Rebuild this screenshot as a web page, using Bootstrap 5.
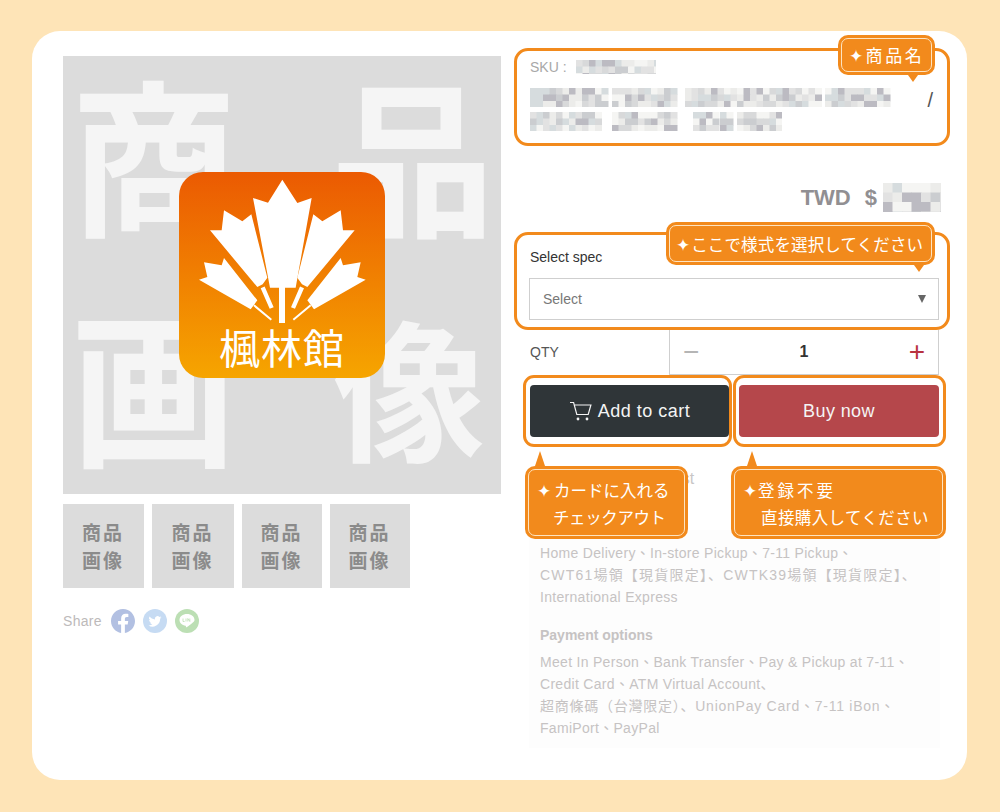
<!DOCTYPE html>
<html lang="ja">
<head>
    <meta charset="UTF-8">
    <meta name="viewport" content="width=device-width, initial-scale=1.0">
    <title>商品ページの説明</title>
    <link rel="stylesheet" href="https://cdn.jsdelivr.net/npm/bootstrap@5.3.2/dist/css/bootstrap.min.css">
    <style>
        html, body { height: 100%; }
        body {
            background-color: #fee4b7;
            padding: 31px 33px 32px 32px;
            font-family: "Liberation Sans", "Noto Sans CJK TC", sans-serif;
            font-size: 14px;
            overflow: hidden;
        }
        .sheet {
            height: 749px;
            background-color: #fff;
            border-radius: 28px;
            padding: 17px 0 0 31px;
            gap: 13px;
        }
        .left-col { width: 438px; margin-top: 8px; }
        .right-col { width: 436px; }

        .main-pic {
            width: 438px;
            height: 438px;
            background-color: #dcdcdc;
            color: #f5f5f5;
            font: 700 168px/1 "Noto Sans CJK JP", sans-serif;
            display: grid;
            grid-template-columns: 1fr 1fr;
            align-content: start;
            padding: 11px 1px 0 7px;
        }
        .main-pic span:nth-child(even) { text-align: right; }
        .main-pic span:nth-child(2) { margin-right: 5px; }
        .main-pic span:nth-child(3) { margin-top: 62px; }
        .main-pic span:nth-child(4) { margin: 73px 15px 0 0; font-size: 152px; }
        .logo-box {
            position: absolute;
            left: 116px;
            top: 116px;
            width: 206px;
            height: 206px;
            border-radius: 24px;
            background: linear-gradient(#eb5a02, #f6a500);
        }
        .logo-box svg { position: absolute; left: 0; top: 0; }
        .logo-name {
            position: absolute;
            left: 0;
            right: 0;
            top: 146px;
            text-align: center;
            color: #fff;
            font: 400 41px/56px "Noto Sans CJK TC", sans-serif;
            letter-spacing: 1px;
        }

        .thumb-row { margin-top: 10px; gap: 8px; }
        .thumb {
            height: 84px;
            background-color: #dcdcdc;
            color: #8b8b8b;
            font: 700 19px/28px "Noto Sans CJK JP", sans-serif;
            letter-spacing: 2px;
            text-align: center;
            padding: 14px 1px 0 0;
        }
        .share-row { margin-top: 21px; gap: 9px; color: #bdbaba; height: 24px; letter-spacing: .3px; }
        .share-row svg { display: block; }
        .share-icons { gap: 8px; }

        .hl-box {
            border: 3px solid #f28a1c;
            border-radius: 14px;
        }
        .title-box { height: 98px; padding: 7px 13px 0 13px; }
        .sku-row { color: #a8a8a8; height: 18px; gap: 9px; }
        .title-row { margin-top: 12px; }
        .title-row svg + svg { margin-top: 5px; }
        .title-slash { color: #555; font-size: 20px; line-height: 24px; margin-right: 1px; }
        .price-row { height: 86px; padding: 37px 9px 0 0; gap: 6px; color: #918f92; font-size: 22px; font-weight: 700; line-height: 29px; }

        .spec-box { height: 98px; padding: 11px 8px 0 12px; }
        .spec-label { color: #333; height: 32px; line-height: 22px; margin-left: 1px; }
        .pick-box {
            height: 42px;
            border: 1px solid #cfcfcf;
            border-radius: 0;
            padding: 0 13px;
            color: #777;
            font-size: 14px;
        }
        .pick-arrow {
            width: 0;
            height: 0;
            border-left: 4px solid transparent;
            border-right: 4px solid transparent;
            border-top: 8px solid #666;
            margin-right: -1px;
        }
        .qty-row { height: 45px; margin: 0 11px 0 16px; color: #555; }
        .qty-box {
            width: 270px;
            border: 1px solid #cfcfcf;
            border-top: 0;
            padding: 0 13px;
            color: #333;
            font-weight: 700;
            font-size: 16px;
        }
        .qty-minus, .qty-plus { font: 400 28px/1 "Liberation Sans", sans-serif; }
        .qty-minus { color: #b5b5b5; }
        .qty-plus { color: #b8323f; }

        .buy-row { margin-left: 9px; width: 423px; gap: 1px; }
        .buy-cell { height: 72px; border-radius: 11px; padding-top: 7px; padding-bottom: 7px; }
        .cell-add { width: 209px; padding-left: 4px; padding-right: 0; }
        .cell-buy { width: 213px; padding-left: 3px; padding-right: 4px; }
        .cta {
            width: 100%;
            height: 52px;
            border: 0;
            border-radius: 4px;
            font-size: 18px;
            color: #f4f4f4;
            gap: 5px;
        }
        .cta-add, .cta-add:hover { background-color: #2f3538; letter-spacing: .5px; }
        .cta-buy, .cta-buy:hover { background-color: #b5474b; letter-spacing: .4px; }
        .wish-row { height: 83px; padding: 20px 0 0 78px; color: #c8c6c6; font-size: 16px; }

        .info-panel {
            width: 411px;
            height: 218px;
            margin-left: 15px;
            padding: 12px 0 0 11px;
            background-color: #fdfdfd;
            color: #c6c3c3;
            line-height: 22px;
            letter-spacing: .3px;
            white-space: nowrap;
        }
        .info-panel p { margin: 0; }
        .info-head { font-weight: 700; letter-spacing: 0; margin-top: 16px !important; margin-bottom: 5px !important; }
        .wide-line { letter-spacing: 1.2px; }
        .mid-line { letter-spacing: .75px; }

        .tip {
            position: absolute;
            background-color: #f28a1c;
            border-radius: 10px;
            padding: 3px;
            z-index: 5;
        }
        .tip-in {
            height: 100%;
            border: 1px solid #fde3c0;
            border-radius: 7px;
            color: #fff;
            font: 400 16.5px/26px "Noto Sans CJK JP", sans-serif;
            white-space: nowrap;
        }
        .tip-star { margin-right: 1px; }
        .tip::after {
            content: "";
            position: absolute;
            border-left: 5px solid transparent;
            border-right: 5px solid transparent;
        }
        .tip-down::after { top: 100%; border-top: 7px solid #f28a1c; }
        .tip-up::after { bottom: 100%; border-bottom: 15px solid #f28a1c; }
        .tip-name { left: 324px; top: -13px; width: 97px; height: 40px; }
        .tip-name .tip-in { padding: 3px 0 0 7px; font-size: 17px; letter-spacing: 2.6px; }
        .tip-name::after { left: 70px; }
        .tip-spec { left: 152px; top: 174px; width: 269px; height: 43px; }
        .tip-spec .tip-in { padding: 5px 0 0 6px; letter-spacing: .15px; }
        .tip-spec::after { left: 248px; }
        .tip-cart { left: 11px; top: 418px; width: 163px; height: 73px; }
        .tip-cart::after { left: 10px; }
        .tip-now { left: 217px; top: 418px; width: 215px; height: 73px; }
        .tip-now::after { left: 16px; }
        .tip-cart .tip-in, .tip-now .tip-in { padding: 7px 0 0 8px; line-height: 27px; }
        .tip-cart .tip-star { margin-right: 3px; }
        .tip-pad { padding-left: 16px; letter-spacing: -.4px; }
        .tip-pad-2 { padding-left: 18px; letter-spacing: .4px; }
        .tip-spread { letter-spacing: 3px; }
    </style>
</head>
<body>
    <main class="sheet d-flex">
        <section class="left-col">
            <div class="main-pic position-relative">
                <span>商</span><span>品</span><span>画</span><span>像</span>
                <div class="logo-box">
                    <svg width="206" height="206" viewBox="55 35 618 618" fill="#fff">
                        <polygon points="365,58 410,128 453,113 405,382 373,382 373,488 355,488 355,382 328,382 277,113 322,127"/>
                        <polygon points="148,210 183,210 190,150 245,183 272,162 320,352 306,372 290,380"/>
                        <polygon points="582,210 547,210 540,150 485,183 458,162 410,352 424,372 440,380"/>
                        <polygon points="115,358 140,350 130,306 183,315 190,293 290,420 270,447"/>
                        <polygon points="615,358 590,350 600,306 547,315 540,293 440,420 460,447"/>
                        <path d="M306 381L333 443M424 381L397 443" stroke="#fff" stroke-width="13" fill="none"/>
                        <path d="M280 435L332 478M450 435L398 478" stroke="#fff" stroke-width="6" fill="none"/>
                    </svg>
                    <div class="logo-name">楓林館</div>
                </div>
            </div>
            <div class="thumb-row d-flex">
                <div class="thumb" style="width: 81px">商品<br>画像</div>
                <div class="thumb" style="width: 82px">商品<br>画像</div>
                <div class="thumb" style="width: 80px">商品<br>画像</div>
                <div class="thumb" style="width: 80px">商品<br>画像</div>
            </div>
            <div class="share-row d-flex align-items-center">
                <span>Share</span>
                <div class="share-icons d-flex">
                    <svg width="24" height="24" viewBox="0 0 16 16" fill="#b2c0e2"><path d="M16 8.049c0-4.446-3.582-8.05-8-8.05C3.58 0-.002 3.603-.002 8.05c0 4.017 2.926 7.347 6.75 7.951v-5.625h-2.03V8.05H6.75V6.275c0-2.017 1.195-3.131 3.022-3.131.876 0 1.791.157 1.791.157v1.98h-1.009c-.993 0-1.303.621-1.303 1.258v1.51h2.218l-.354 2.326H9.25V16c3.824-.604 6.75-3.934 6.75-7.951z"/></svg>
                    <svg width="24" height="24" viewBox="0 0 24 24"><circle cx="12" cy="12" r="12" fill="#c6dbf3"/><g transform="translate(5.5 5.5) scale(.81)"><path fill="#fff" d="M5.026 15c6.038 0 9.341-5.003 9.341-9.334 0-.14 0-.282-.006-.422A6.685 6.685 0 0 0 16 3.542a6.658 6.658 0 0 1-1.889.518 3.301 3.301 0 0 0 1.447-1.817 6.533 6.533 0 0 1-2.087.793A3.286 3.286 0 0 0 7.875 6.03a9.325 9.325 0 0 1-6.767-3.429 3.289 3.289 0 0 0 1.018 4.382A3.323 3.323 0 0 1 .64 6.575v.045a3.288 3.288 0 0 0 2.632 3.218 3.203 3.203 0 0 1-.865.115 3.23 3.23 0 0 1-.614-.057 3.283 3.283 0 0 0 3.067 2.277A6.588 6.588 0 0 1 .78 13.58a6.32 6.32 0 0 1-.78-.045A9.344 9.344 0 0 0 5.026 15z"/></g></svg>
                    <svg width="24" height="24" viewBox="0 0 24 24"><circle cx="12" cy="12" r="12" fill="#bcdfb4"/><path fill="#fff" d="M12 5c-4.2 0-7.5 2.6-7.5 5.9 0 2.9 2.6 5.3 6.1 5.8.5.1.4.6.3 1.2-.1.5.2.6.7.3 1.2-.7 4.4-2.6 6-4.4 1.2-1.1 1.9-1.9 1.9-2.9C19.5 7.6 16.2 5 12 5z"/><path d="M8 9.5v3h1.6M11 9.5v3M12.8 12.5v-3l2 3v-3" fill="none" stroke="#bcdfb4" stroke-width=".8"/></svg>
                </div>
            </div>
        </section>

        <section class="right-col position-relative">
            <div class="hl-box title-box">
                <div class="sku-row d-flex align-items-center">
                    <span>SKU :</span>
                    <svg class="mosaic" width="80" height="14" data-words="0,80" data-cell="6.5"></svg>
                </div>
                <div class="title-row d-flex justify-content-between align-items-start">
                    <div>
                        <svg class="mosaic d-block" width="362" height="19" data-words="0,73;82,65;155,132;295,65" data-cell="6.5"></svg>
                        <svg class="mosaic d-block" width="252" height="19" data-words="0,67;82,65;163,20;190,10;207,43" data-cell="6.5"></svg>
                    </div>
                    <span class="title-slash">/</span>
                </div>
            </div>

            <div class="price-row d-flex justify-content-end align-items-start">
                <span>TWD</span><span class="ms-2">$</span>
                <svg class="mosaic" width="58" height="29" data-words="0,58" data-cell="9.5"></svg>
            </div>

            <div class="hl-box spec-box">
                <div class="spec-label">Select spec</div>
                <div class="pick-box d-flex align-items-center justify-content-between">
                    <span>Select</span>
                    <span class="pick-arrow"></span>
                </div>
            </div>

            <div class="qty-row d-flex justify-content-between align-items-center">
                <span>QTY</span>
                <div class="qty-box h-100 d-flex justify-content-between align-items-center">
                    <span class="qty-minus">−</span>
                    <span>1</span>
                    <span class="qty-plus">+</span>
                </div>
            </div>

            <div class="buy-row d-flex">
                <div class="hl-box buy-cell cell-add">
                    <button type="button" class="btn cta cta-add d-flex align-items-center justify-content-center">
                        <svg width="24" height="22" viewBox="0 0 24 22" fill="none" stroke="#f4f4f4" stroke-width="1.2">
                            <path d="M1 2.5h3.6l3.2 12h11.4l2.7-9.5H5.4"/>
                            <circle cx="9" cy="19" r="1.4" fill="#f4f4f4" stroke="none"/>
                            <circle cx="18" cy="19" r="1.4" fill="#f4f4f4" stroke="none"/>
                        </svg>
                        <span>Add to cart</span>
                    </button>
                </div>
                <div class="hl-box buy-cell cell-buy">
                    <button type="button" class="btn cta cta-buy d-flex align-items-center justify-content-center">Buy now</button>
                </div>
            </div>

            <div class="wish-row">Add to wishlist</div>

            <div class="info-panel">
                <p>Home Delivery、In-store Pickup、7-11 Pickup、<br><span class="wide-line">CWT61場領【現貨限定】、CWTK39場領【現貨限定】、</span><br>International Express</p>
                <p class="info-head">Payment options</p>
                <p>Meet In Person、Bank Transfer、Pay &amp; Pickup at 7-11、<br>Credit Card、ATM Virtual Account、<br><span class="mid-line">超商條碼（台灣限定）、UnionPay Card、7-11 iBon、</span><br>FamiPort、PayPal</p>
            </div>

            <div class="tip tip-down tip-name"><div class="tip-in">✦商品名</div></div>
            <div class="tip tip-down tip-spec"><div class="tip-in"><span class="tip-star">✦</span>ここで様式を選択してください</div></div>
            <div class="tip tip-up tip-cart"><div class="tip-in"><span class="tip-star">✦</span>カードに入れる<br><span class="tip-pad">チェックアウト</span></div></div>
            <div class="tip tip-up tip-now"><div class="tip-in"><span class="tip-star">✦</span><span class="tip-spread">登録不要</span><br><span class="tip-pad-2">直接購入してください</span></div></div>
        </section>
    </main>

    <script src="https://cdn.jsdelivr.net/npm/bootstrap@5.3.2/dist/js/bootstrap.bundle.min.js"></script>
    <script>
        // pixelated blur over the hidden product text
        const shades = ['#f5f5f3', '#ececea', '#e2e2e2', '#d8d9da', '#cbcdd0', '#bcbbc2', '#d6dcde'];
        let seed = 7;
        function next() {
            seed = (seed * 137 + 59) % 1009;
            return seed;
        }
        document.querySelectorAll('.mosaic').forEach(svg => {
            const cell = parseFloat(svg.dataset.cell);
            const height = parseFloat(svg.getAttribute('height'));
            let rects = '';
            svg.dataset.words.split(';').forEach(word => {
                const [start, width] = word.split(',').map(Number);
                for (let y = 0; y < height; y += cell) {
                    for (let x = start; x < start + width; x += cell) {
                        const fill = shades[next() % shades.length];
                        rects += `<rect x="${x}" y="${y}" width="${cell + .5}" height="${cell + .5}" fill="${fill}"/>`;
                    }
                }
            });
            svg.innerHTML = rects;
        });
    </script>
</body>
</html>
